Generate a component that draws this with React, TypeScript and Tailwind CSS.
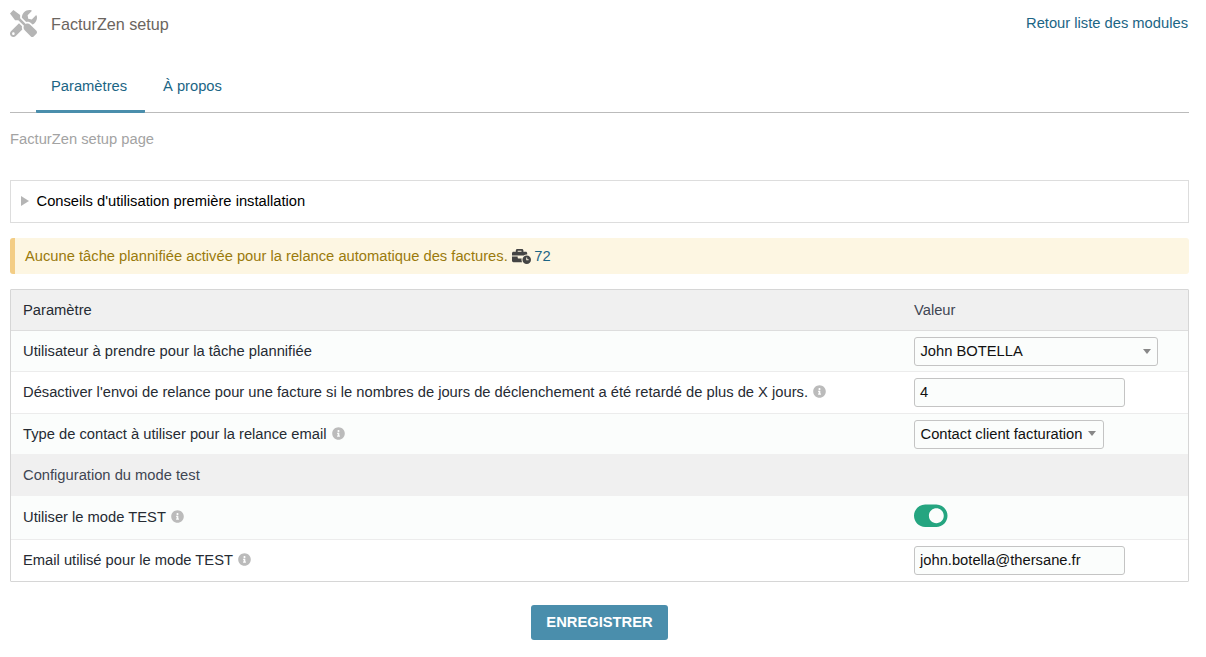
import { FaTools, FaBusinessTime, FaInfoCircle, FaToggleOn } from "react-icons/fa";

function Info() {
  return <FaInfoCircle className="inline-block ml-[5px] text-[13px] text-[#bbbbbb] align-[-1px]" />;
}

function Arrow() {
  return <span className="w-0 h-0 border-x-[4px] border-x-transparent border-t-[5px] border-t-[#888888]" />;
}

const inputCls =
  "h-[29px] bg-[#fbfdfc] border border-[#c4c4c4] rounded-[3px] flex items-center text-[14.72px] text-[#111111]";

function Row({
  label,
  info,
  children,
  h,
  up = "",
  border = true,
  bg = "bg-[#fbfdfc]",
}: {
  label: string;
  info?: boolean;
  children?: React.ReactNode;
  h: string;
  up?: string;
  border?: boolean;
  bg?: string;
}) {
  return (
    <div className={`flex items-center ${h} ${bg} ${border ? "border-b border-[#ececec]" : ""}`}>
      <div className={`w-[890px] pl-3 text-[#262b33] ${up}`}>
        {label}
        {info && <Info />}
      </div>
      <div className="pl-[13px] flex-1 flex items-center">{children}</div>
    </div>
  );
}

export default function App() {
  return (
    <div className="w-[1206px] h-[657px] bg-white px-[10px] overflow-hidden font-['Liberation_Sans',Arial,sans-serif] text-[14.72px] leading-[18px]">
      <div className="w-[1179px]">
        <div className="flex justify-between h-[46px]">
          <div className="flex items-start pt-[10px]">
            <FaTools className="text-[27px] text-[#b5b5b5]" />
            <span className="ml-[14px] mt-[5px] text-[16.2px] text-[#6b6560]">FacturZen setup</span>
          </div>
          <a className="pt-[14px] pr-[1px] text-[#1b6585]">Retour liste des modules</a>
        </div>

        <div className="flex h-[67px] border-b border-[#bbbbbb] pl-[26px] items-stretch">
          <div className="w-[109px] h-[67px] flex items-start pl-[15px] pt-[31px] border-b-[3px] border-[#4a8eac] rounded-b-[1px] text-[#1b6585]">
            Paramètres
          </div>
          <div className="ml-[18px] pt-[31px] text-[#1b6585]">À propos</div>
        </div>

        <p className="mt-[17px] text-[#a3a3a3]">FacturZen setup page</p>

        <div className="mt-[32px] h-[43px] border border-[#dddddd] flex items-center pl-[10px] pb-[2px] text-black">
          <span className="w-0 h-0 border-y-[5px] border-y-transparent border-l-[8px] border-l-[#b5b5b5] mr-[7.5px]" />
          Conseils d'utilisation première installation
        </div>

        <div className="mt-[15px] h-[36px] bg-[#fdf6e2] border-l-[5px] border-[#f3cd85] rounded-[3px] flex items-center pl-[10px] text-[#9a7a0c]">
          Aucune tâche plannifiée activée pour la relance automatique des factures.
          <FaBusinessTime className="ml-[4px] mr-[3.5px] text-[19px] text-[#444444]" />
          <span className="text-[#1b6585]">72</span>
        </div>

        <div className="mt-[15px] border border-[#d6d6d6] rounded-[1px]">
          <Row label="Paramètre" h="h-[40px]" bg="bg-[#f0f0f0]" border={false}>
            <span className="text-[#3f4653]">Valeur</span>
          </Row>
          <div className="border-t border-[#dddddd]" />
          <Row label="Utilisateur à prendre pour la tâche plannifiée" h="h-[41px]">
            <div className={`${inputCls} w-[244px] pl-[5.5px] pr-[6px] justify-between h-[28px]`}>
              John BOTELLA
              <Arrow />
            </div>
          </Row>
          <Row
            label="Désactiver l'envoi de relance pour une facture si le nombres de jours de déclenchement a été retardé de plus de X jours."
            info
            up="pb-[2px]"
            h="h-[42px]"
            bg="bg-white"
          >
            <div className={`${inputCls} w-[211px] pl-[5px] pb-[2px]`}>4</div>
          </Row>
          <Row label="Type de contact à utiliser pour la relance email" info up="pb-[1px]" h="h-[40px]" border={false}>
            <div className={`${inputCls} w-[190px] pl-[5.5px] pr-[7px] pb-[1px] justify-between h-[28px]`}>
              Contact client facturation
              <Arrow />
            </div>
          </Row>
          <div className="h-[42px] bg-[#f0f0f0] flex items-center pl-3 pb-[1px] text-[#3f4653]">Configuration du mode test</div>
          <Row label="Utiliser le mode TEST" info up="pb-[2px]" h="h-[44px]">
            <FaToggleOn className="text-[33.5px] text-[#25a580] -mt-[3px]" />
          </Row>
          <Row label="Email utilisé pour le mode TEST" info up="pb-[2px]" h="h-[41px]" border={false} bg="bg-white">
            <div className={`${inputCls} w-[211px] pl-[5px] pb-[2px]`}>john.botella@thersane.fr</div>
          </Row>
        </div>

        <div className="mt-[23px] flex justify-center">
          <button className="w-[137px] h-[35px] pb-[2px] bg-[#4a8eac] rounded-[3px] text-white font-bold text-[14.72px]">
            ENREGISTRER
          </button>
        </div>
      </div>
    </div>
  );
}
